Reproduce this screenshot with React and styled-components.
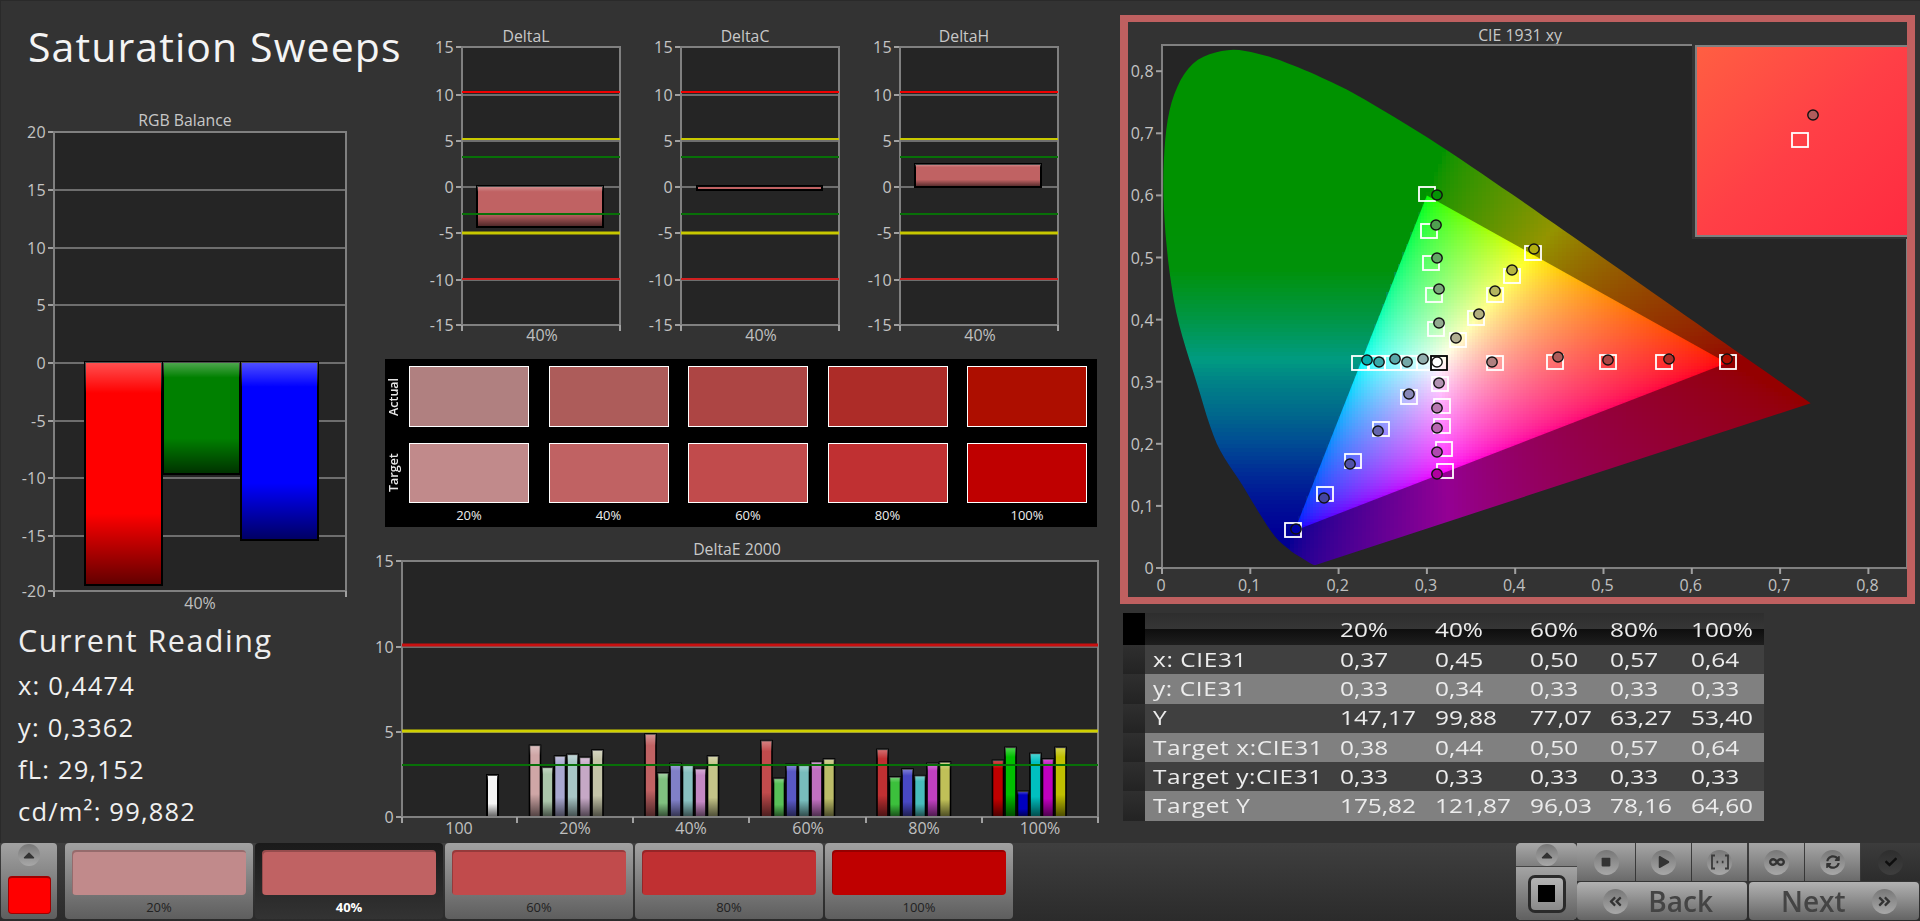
import React from "react";
import styled, { createGlobalStyle } from "styled-components";
import {
  FaStop,
  FaPlay,
  FaCheck,
  FaSyncAlt,
  FaInfinity,
  FaAngleDoubleLeft,
  FaAngleDoubleRight,
  FaCaretUp,
} from "react-icons/fa";

const FONT = `"Open Sans", "Noto Sans", "Liberation Sans", sans-serif`;
const LEVELS = ["20%", "40%", "60%", "80%", "100%"];
const ACTUAL = ["#b08080", "#ad5c5a", "#ad4544", "#ad2c28", "#ad0e00"];
const TARGET = ["#c18a8b", "#c06263", "#c14b4c", "#c03032", "#bf0000"];

const GlobalStyle = createGlobalStyle`
  html, body { margin: 0; padding: 0; background: #333; }
  body { font-family: ${FONT}; overflow: hidden; }
`;

// spectral locus, CIE 1931, nudged a bit to follow the picture
const LOCUS_RAW = [
  [0.1741, 0.005], [0.1726, 0.0048], [0.1689, 0.0069], [0.1566, 0.0177], [0.144, 0.0297],
  [0.1241, 0.0578], [0.0913, 0.1327], [0.062, 0.2007], [0.04, 0.295], [0.016, 0.4127],
  [0.004, 0.5384], [0.002, 0.6548], [0.011, 0.7502], [0.035, 0.812], [0.0743, 0.8338],
  [0.1142, 0.8262], [0.1547, 0.8059], [0.1929, 0.7816], [0.2296, 0.7543], [0.3016, 0.6923],
  [0.3731, 0.6245], [0.4441, 0.5547], [0.5125, 0.4866], [0.5752, 0.4242], [0.627, 0.3725],
  [0.6915, 0.3083], [0.7347, 0.2653],
];
const GAMUT = [[0.64, 0.33], [0.3, 0.6], [0.15, 0.06]];

const smooth = (pts) => {
  const out = [];
  for (let i = 0; i < pts.length - 1; i++) {
    const p0 = pts[Math.max(i - 1, 0)];
    const p1 = pts[i];
    const p2 = pts[i + 1];
    const p3 = pts[Math.min(i + 2, pts.length - 1)];
    for (let s = 0; s < 6; s++) {
      const t = s / 6;
      out.push([0, 1].map((k) =>
        0.5 * (2 * p1[k] + (p2[k] - p0[k]) * t +
          (2 * p0[k] - 5 * p1[k] + 4 * p2[k] - p3[k]) * t * t +
          (3 * p1[k] - p0[k] - 3 * p2[k] + p3[k]) * t * t * t)
      ));
    }
  }
  out.push(pts[pts.length - 1]);
  return out;
};
const LOCUS = smooth(LOCUS_RAW);

const px = (x) => 1162 + x * 883;
const py = (y) => 568 - y * 621;
const toPoints = (list) => list.map(([x, y]) => `${px(x).toFixed(1)},${py(y).toFixed(1)}`).join(" ");

const LEFT_RAMP = [
  [0.6, 146, 0], [0.48, 146, 10], [0.4, 150, 70], [0.335, 155, 130], [0.3, 130, 135],
  [0.25, 105, 140], [0.2, 75, 148], [0.15, 42, 150], [0.1, 15, 150], [0.06, 0, 150], [0, 0, 140],
];

const leftColor = (y) => {
  for (let i = 0; i < LEFT_RAMP.length - 1; i++) {
    const [y1, g1, b1] = LEFT_RAMP[i];
    const [y2, g2, b2] = LEFT_RAMP[i + 1];
    if (y <= y1 && y >= y2) {
      const t = (y1 - y) / (y1 - y2);
      return `rgb(0,${Math.round(g1 + (g2 - g1) * t)},${Math.round(b1 + (b2 - b1) * t)})`;
    }
  }
  return "rgb(0,146,0)";
};

const cieColor = (x, y, scale) => {
  const X = x / y;
  const Z = (1 - x - y) / y;
  const lin = [
    3.2406 * X - 1.5372 - 0.4986 * Z,
    -0.9689 * X + 1.8758 + 0.0415 * Z,
    0.0557 * X - 0.204 + 1.057 * Z,
  ].map((v) => Math.max(v, 0));
  const top = Math.max(...lin) || 1;
  const [r, g, b] = lin.map((v) => Math.round(255 * scale * Math.pow(v / top, 1 / 1.7)));
  return `rgb(${r},${g},${b})`;
};

const outerColor = (x, y) => {
  const edge = 0.15 + (y - 0.06) * (0.15 / 0.54);
  if (x < edge) return leftColor(y);
  return cieColor(x, y, 0.58);
};

const buildCells = (x0, x1, y0, y1, step, colorAt) => {
  const cells = [];
  for (let top = y0; top < y1; top += step) {
    for (let left = x0; left < x1; left += step) {
      const x = (left + step / 2 - 1162) / 883;
      const y = (568 - top - step / 2) / 621;
      if (y <= 0.001 || x <= 0) continue;
      cells.push({ x: left, y: top, fill: colorAt(x, y) });
    }
  }
  return cells;
};

const OUTER_CELLS = buildCells(1162, 1812, 48, 568, 4, outerColor);
const INNER_CELLS = buildCells(1292, 1728, 192, 532, 3, (x, y) => cieColor(x, y, 1));

const SQUARES = [
  [1427, 194], [1429, 231], [1431, 263], [1434, 295], [1436, 329],
  [1533, 253], [1512, 276], [1495, 295], [1476, 318], [1458, 340],
  [1495, 363], [1555, 362], [1608, 362], [1664, 362], [1728, 362],
  [1360, 363], [1377, 363], [1393, 363], [1409, 363], [1425, 363],
  [1440, 384], [1442, 406], [1442, 426], [1444, 449], [1445, 471],
  [1409, 397], [1381, 429], [1353, 461], [1325, 494], [1293, 530],
  [1800, 140],
];

const DOTS = [
  [1437, 195, "#049304"], [1436, 225, "#4f9f4f"], [1437, 258, "#62a763"], [1439, 289, "#7aa87a"], [1439, 323, "#92aa90"],
  [1534, 249, "#b0ae10"], [1512, 270, "#b6b63f"], [1495, 291, "#b5b55f"], [1479, 314, "#b2b07f"], [1456, 338, "#b0ae92"],
  [1492, 362, "#b08080"], [1558, 357, "#ad5c5a"], [1608, 360, "#ad4544"], [1669, 359, "#ad2c28"], [1727, 359, "#ad0e00"],
  [1367, 360, "#08adad"], [1379, 362, "#38a8a8"], [1395, 359, "#5aa8a8"], [1407, 362, "#74a8a8"], [1423, 359, "#92aeae"],
  [1437, 362, "#ffffff"],
  [1439, 383, "#b292b2"], [1437, 408, "#b878b0"], [1437, 428, "#b866b0"], [1437, 452, "#b048b0"], [1437, 474, "#b000a0"],
  [1409, 394, "#8888b8"], [1378, 431, "#6565ad"], [1350, 464, "#5252a8"], [1324, 498, "#4444a0"], [1296, 529, "#0000a8"],
  [1813, 115, "#b05c5c"],
];

const BAR_GROUPS = [
  { x: 529.5, tops: [646, 712, 678, 673, 682, 660], colors: ["#cfa6a6", "#aac6aa", "#a8a8d0", "#a8c6c6", "#c6a8c6", "#c4c4a8"] },
  { x: 645, tops: [612, 729, 700, 706, 716, 678], colors: ["#c06263", "#80c080", "#8080c8", "#88c0c0", "#c488c4", "#c4c488"] },
  { x: 761, tops: [632, 745, 703, 706, 695, 687], colors: ["#c14b4c", "#58c058", "#5858c4", "#78bcbc", "#c070c0", "#bcbc68"] },
  { x: 877, tops: [658, 741, 717, 737, 700, 696], colors: ["#c03032", "#3cc03c", "#4848c4", "#48bcbc", "#c040c0", "#c0c058"] },
  { x: 992.5, tops: [691, 652, 784, 670, 687, 652], colors: ["#bf0000", "#00bf00", "#0000bf", "#00bfbf", "#bf00bf", "#bfbf00"] },
];

const TABLE = [
  ["x: CIE31", "0,37", "0,45", "0,50", "0,57", "0,64"],
  ["y: CIE31", "0,33", "0,34", "0,33", "0,33", "0,33"],
  ["Y", "147,17", "99,88", "77,07", "63,27", "53,40"],
  ["Target x:CIE31", "0,38", "0,44", "0,50", "0,57", "0,64"],
  ["Target y:CIE31", "0,33", "0,33", "0,33", "0,33", "0,33"],
  ["Target Y", "175,82", "121,87", "96,03", "78,16", "64,60"],
];

const DeltaChart = ({ left, title, bar }) => {
  const right = left + 158;
  const rows = [[15, 47], [10, 95], [5, 141], [0, 187], [-5, 233], [-10, 280], [-15, 325]];
  return (
    <ChartSvg width={219} height={324} viewBox={`${left - 50} 21 219 324`}>
      <ChartTitle x={left + 64} y={36}>{title}</ChartTitle>
      <rect x={left} y={47} width={158} height={278} fill="#252525" />
      {rows.map(([label, y]) => (
        <g key={label}>
          <GridLine x1={left} x2={right} y1={y} y2={y} />
          <TickLine x1={left - 6} x2={left} y1={y} y2={y} />
          <TickLabel x={left - 8} y={y}>{label}</TickLabel>
        </g>
      ))}
      <PlotFrame x={left} y={47} width={158} height={278} />
      <Limit x1={left} x2={right} y1={92} y2={92} stroke="#f00000" />
      <Limit x1={left} x2={right} y1={139} y2={139} stroke="#c8c800" />
      <Limit x1={left} x2={right} y1={157} y2={157} stroke="#087008" />
      <BarRect x={left + bar.dx} y={bar.y} width={bar.w} height={bar.h} fill="#c06263" />
      <BarSheen x={left + bar.dx} y={bar.y} width={bar.w} height={bar.h} />
      <Limit x1={left} x2={right} y1={214} y2={214} stroke="#087008" />
      <Limit x1={left} x2={right} y1={233} y2={233} stroke="#c8c800" $thick />
      <Limit x1={left} x2={right} y1={279} y2={279} stroke="#d02020" />
      <TickLine x1={left} x2={left} y1={325} y2={331} />
      <TickLine x1={right} x2={right} y1={325} y2={331} />
      <AxisLabel x={left + 80} y={335}>40%</AxisLabel>
    </ChartSvg>
  );
};

const RgbChart = () => {
  const rows = [[20, 132], [15, 190], [10, 248], [5, 305], [0, 363], [-5, 421], [-10, 478], [-15, 536], [-20, 591]];
  const bars = [
    { x: 85, w: 77, bottom: 585, fill: "#ff0000" },
    { x: 163, w: 77, bottom: 474, fill: "#008000" },
    { x: 241, w: 77, bottom: 540, fill: "#0000ff" },
  ];
  return (
    <ChartSvg width={376} height={515} viewBox="0 100 376 515">
      <defs>
        <linearGradient id="bar-sheen" x1="0" y1="0" x2="0" y2="1">
          <stop offset="0" stopColor="#fff" stopOpacity="0.32" />
          <stop offset="0.14" stopColor="#fff" stopOpacity="0" />
          <stop offset="0.68" stopColor="#000" stopOpacity="0" />
          <stop offset="1" stopColor="#000" stopOpacity="0.62" />
        </linearGradient>
      </defs>
      <ChartTitle x={185} y={120}>RGB Balance</ChartTitle>
      <rect x={54} y={132} width={292} height={459} fill="#252525" />
      {rows.map(([label, y]) => (
        <g key={label}>
          <GridLine x1={54} x2={346} y1={y} y2={y} />
          <TickLine x1={48} x2={54} y1={y} y2={y} />
          <TickLabel x={46} y={y}>{label}</TickLabel>
        </g>
      ))}
      <PlotFrame x={54} y={132} width={292} height={459} />
      {bars.map((b) => (
        <g key={b.x}>
          <BarRect x={b.x} y={362} width={b.w} height={b.bottom - 362} fill={b.fill} />
          <BarSheen x={b.x} y={362} width={b.w} height={b.bottom - 362} />
        </g>
      ))}
      <TickLine x1={54} x2={54} y1={591} y2={597} />
      <TickLine x1={346} x2={346} y1={591} y2={597} />
      <AxisLabel x={200} y={603}>40%</AxisLabel>
    </ChartSvg>
  );
};

const DeltaEChart = () => {
  const ticks = [402, 517, 633, 749, 866, 982, 1098];
  const labels = [["100", 459], ["20%", 575], ["40%", 691], ["60%", 808], ["80%", 924], ["100%", 1040]];
  const rows = [[15, 561], [10, 647], [5, 732], [0, 817]];
  return (
    <ChartSvg width={740} height={308} viewBox="376 535 740 308">
      <ChartTitle x={737} y={549}>DeltaE 2000</ChartTitle>
      <rect x={402} y={561} width={696} height={256} fill="#252525" />
      {rows.map(([label, y]) => (
        <g key={label}>
          <GridLine x1={402} x2={1098} y1={y} y2={y} />
          <TickLine x1={396} x2={402} y1={y} y2={y} />
          <TickLabel x={394} y={y}>{label}</TickLabel>
        </g>
      ))}
      <BarRect x={487} y={775} width={11} height={42} fill="#f4f4f4" />
      <BarSheen x={487} y={775} width={11} height={42} />
      {BAR_GROUPS.map((group) =>
        group.tops.map((top, i) => {
          const y = 530 + top / 3;
          const x = group.x + i * 12.5;
          return (
            <g key={x}>
              <BarRect x={x} y={y} width={11} height={817 - y} fill={group.colors[i]} $thin />
              <BarSheen x={x} y={y} width={11} height={817 - y} />
            </g>
          );
        })
      )}
      <PlotFrame x={402} y={561} width={696} height={256} />
      <Limit x1={402} x2={1098} y1={645} y2={645} stroke="#c81010" $thick />
      <Limit x1={402} x2={1098} y1={731} y2={731} stroke="#d0d000" $thick />
      <Limit x1={402} x2={1098} y1={765} y2={765} stroke="#087008" />
      {ticks.map((x) => (
        <TickLine key={x} x1={x} x2={x} y1={817} y2={823} />
      ))}
      {labels.map(([text, x]) => (
        <AxisLabel key={text} x={x} y={828}>{text}</AxisLabel>
      ))}
    </ChartSvg>
  );
};

const CieChart = () => {
  const ticks = [0, 0.1, 0.2, 0.3, 0.4, 0.5, 0.6, 0.7, 0.8];
  const label = (v) => (v === 0 ? "0" : v.toFixed(1).replace(".", ","));
  return (
    <ChartSvg width={779} height={575} viewBox="1128 22 779 575">
      <defs>
        <clipPath id="locus-clip">
          <polygon points={toPoints(LOCUS)} />
        </clipPath>
        <clipPath id="gamut-clip">
          <polygon points={toPoints(GAMUT)} />
        </clipPath>
        <linearGradient id="inset-a" x1="0" y1="0" x2="1" y2="1">
          <stop offset="0" stopColor="#ff5f42" />
          <stop offset="0.5" stopColor="#ff3f46" />
          <stop offset="1" stopColor="#ff2a40" />
        </linearGradient>
      </defs>
      <ChartTitle x={1520} y={35}>CIE 1931 xy</ChartTitle>
      <PlotFill x={1162} y={45} width={745} height={523} />
      <g clipPath="url(#locus-clip)" shapeRendering="crispEdges">
        {OUTER_CELLS.map((c) => (
          <rect key={`${c.x}-${c.y}`} x={c.x} y={c.y} width={4} height={4} fill={c.fill} />
        ))}
      </g>
      <g clipPath="url(#gamut-clip)" shapeRendering="crispEdges">
        {INNER_CELLS.map((c) => (
          <rect key={`${c.x}-${c.y}`} x={c.x} y={c.y} width={3} height={3} fill={c.fill} />
        ))}
      </g>
      <PlotFrame x={1162} y={45} width={745} height={523} />
      {ticks.map((v) => (
        <g key={v}>
          <TickLine x1={1156} x2={1162} y1={py(v)} y2={py(v)} />
          <TickLabel x={1154} y={py(v)}>{label(v)}</TickLabel>
          <TickLine x1={px(v)} x2={px(v)} y1={568} y2={574} />
          <AxisLabel x={px(v) - 1} y={585}>{label(v)}</AxisLabel>
        </g>
      ))}
      <rect x={1692} y={42} width={218} height={197} fill="#333" />
      <InsetRect x={1696} y={46} width={212} height={190} fill="url(#inset-a)" />
      {SQUARES.map(([x, y]) => (
        <Target key={`${x}-${y}`} x={x - 8} y={y - 7} width={16} height={14} />
      ))}
      <Target x={1431} y={356} width={16} height={14} stroke="#000" />
      {DOTS.map(([x, y, fill]) => (
        <Reading key={`${x}-${y}`} cx={x} cy={y} rx={5.2} ry={5} fill={fill} />
      ))}
    </ChartSvg>
  );
};

const BracketIcon = () => (
  <svg width="20" height="16" viewBox="0 0 20 16" fill="none" stroke="#3a3a3a" strokeWidth="1.8">
    <path d="M5 1.5H2V14.5H5M15 1.5H18V14.5H15" />
    <path d="M6.5 8H8.2M11.8 8H13.5" strokeWidth="2.4" />
  </svg>
);

export default function App() {
  return (
    <Page>
      <GlobalStyle />
      <Content>
        <LeftColumn>
          <Title>Saturation Sweeps</Title>
          <RgbChart />
          <Readings>
            <ReadingTitle>Current Reading</ReadingTitle>
            <ReadingRow>x: 0,4474</ReadingRow>
            <ReadingRow>y: 0,3362</ReadingRow>
            <ReadingRow>fL: 29,152</ReadingRow>
            <ReadingRow>cd/m²: 99,882</ReadingRow>
          </Readings>
        </LeftColumn>

        <MiddleColumn>
          <DeltaRow>
            <DeltaChart left={462} title="DeltaL" bar={{ dx: 15, y: 186, w: 126, h: 41 }} />
            <DeltaChart left={681} title="DeltaC" bar={{ dx: 16, y: 186, w: 125, h: 4 }} />
            <DeltaChart left={900} title="DeltaH" bar={{ dx: 15, y: 164, w: 126, h: 23 }} />
          </DeltaRow>
          <SwatchPanel>
            <RowLabel>Actual</RowLabel>
            {ACTUAL.map((c) => (
              <Swatch key={c} $color={c} />
            ))}
            <RowLabel>Target</RowLabel>
            {TARGET.map((c) => (
              <Swatch key={c} $color={c} />
            ))}
            <span />
            {LEVELS.map((l) => (
              <SwatchCaption key={l}>{l}</SwatchCaption>
            ))}
          </SwatchPanel>
          <DeltaEChart />
        </MiddleColumn>

        <RightColumn>
          <CieFrame>
            <CieChart />
          </CieFrame>
          <DataTable>
            <thead>
              <tr>
                <CornerCell />
                <HeadCell />
                {LEVELS.map((l) => (
                  <HeadCell key={l}><CellText>{l}</CellText></HeadCell>
                ))}
              </tr>
            </thead>
            <tbody>
              {TABLE.map((row, i) => (
                <DataRow key={row[0]} $alt={i % 2 === 1}>
                  <GutterCell />
                  {row.map((cell, j) => (
                    <DataCell key={j} $first={j === 0}>
                      <CellText $first={j === 0}>{cell}</CellText>
                    </DataCell>
                  ))}
                </DataRow>
              ))}
            </tbody>
          </DataTable>
        </RightColumn>
      </Content>

      <BottomBar>
        <ColorButton>
          <RoundButton $small>
            <FaCaretUp size={18} />
          </RoundButton>
          <ColorChip />
        </ColorButton>
        <Tabs>
          {LEVELS.map((l, i) => (
            <Tab key={l} $active={i === 1}>
              <TabSwatch $color={TARGET[i]} />
              <TabLabel $active={i === 1}>{l}</TabLabel>
            </Tab>
          ))}
        </Tabs>
        <Controls>
          <StopPanel>
            <StopTop>
              <RoundButton $small>
                <FaCaretUp size={18} />
              </RoundButton>
            </StopTop>
            <StopBottom>
              <StopFrame>
                <StopMark />
              </StopFrame>
            </StopBottom>
          </StopPanel>
          <ControlGrid>
            <ToolRow>
              <ToolCell><RoundButton><FaStop size={10} /></RoundButton></ToolCell>
              <ToolCell><RoundButton><FaPlay size={12} /></RoundButton></ToolCell>
              <ToolCell><RoundButton><BracketIcon /></RoundButton></ToolCell>
              <ToolCell $gap><RoundButton><FaInfinity size={16} /></RoundButton></ToolCell>
              <ToolCell><RoundButton><FaSyncAlt size={14} /></RoundButton></ToolCell>
              <ToolCell $dark $grow><RoundButton $dark><FaCheck size={12} /></RoundButton></ToolCell>
            </ToolRow>
            <NavRow>
              <NavButton>
                <RoundButton><FaAngleDoubleLeft size={15} /></RoundButton>
                <NavText>Back</NavText>
              </NavButton>
              <NavButton $reverse>
                <RoundButton><FaAngleDoubleRight size={15} /></RoundButton>
                <NavText>Next</NavText>
              </NavButton>
            </NavRow>
          </ControlGrid>
        </Controls>
      </BottomBar>
    </Page>
  );
}

const Page = styled.div`
  width: 1920px;
  height: 921px;
  display: flex;
  flex-direction: column;
  background: #333;
  color: #eee;
  font-family: ${FONT};
  box-shadow: inset 1px 1px 0 #2a2a2a;
`;

const Content = styled.div`
  display: flex;
  height: 843px;
`;

const LeftColumn = styled.div`
  width: 376px;
  display: flex;
  flex-direction: column;
`;

const Title = styled.h1`
  height: 100px;
  margin: 0;
  padding: 18px 0 0 28px;
  box-sizing: border-box;
  font-size: 41px;
  font-weight: 400;
  line-height: 56px;
  letter-spacing: 1.1px;
  white-space: nowrap;
  color: #f4f4f4;
`;

const ChartSvg = styled.svg`
  display: block;
  flex: none;
  font-family: ${FONT};
`;

const ChartTitle = styled.text`
  font-size: 15.8px;
  fill: #c8c8c8;
  text-anchor: middle;
  dominant-baseline: central;
`;

const TickLabel = styled.text`
  font-size: 16px;
  fill: #c4c4c4;
  text-anchor: end;
  dominant-baseline: central;
  letter-spacing: 0.3px;
`;

const AxisLabel = styled.text`
  font-size: 16px;
  fill: #c0c0c0;
  text-anchor: middle;
  dominant-baseline: central;
`;

const GridLine = styled.line`
  stroke: #6e6e6e;
  stroke-width: 2;
`;

const TickLine = styled.line`
  stroke: #a0a0a0;
  stroke-width: 2;
`;

const PlotFrame = styled.rect`
  fill: none;
  stroke: #808080;
  stroke-width: 2;
`;

const PlotFill = styled.rect`
  fill: #252525;
`;

const Limit = styled.line`
  stroke-width: ${(p) => (p.$thick ? 3 : 2)};
`;

const BarRect = styled.rect`
  stroke: #000;
  stroke-width: ${(p) => (p.$thin ? 1.6 : 2)};
`;

const BarSheen = styled.rect.attrs({ fill: "url(#bar-sheen)" })``;

const InsetRect = styled.rect`
  stroke: #808080;
  stroke-width: 2;
`;

const Target = styled.rect`
  fill: none;
  stroke: ${(p) => p.stroke || "#fff"};
  stroke-width: 1.8;
`;

const Reading = styled.ellipse`
  stroke: #111;
  stroke-width: 1.4;
`;

const Readings = styled.div`
  padding: 5px 0 0 18px;
  display: flex;
  flex-direction: column;
`;

const ReadingTitle = styled.div`
  font-size: 30.5px;
  line-height: 40px;
  margin-bottom: 4px;
  letter-spacing: 1.5px;
  color: #eee;
`;

const ReadingRow = styled.div`
  font-size: 25.5px;
  line-height: 42px;
  letter-spacing: 1.2px;
  color: #f0f0f0;
`;

const MiddleColumn = styled.div`
  width: 744px;
  display: flex;
  flex-direction: column;
`;

const DeltaRow = styled.div`
  display: flex;
  height: 359px;
  padding: 21px 0 0 36px;
  box-sizing: border-box;
`;

const SwatchPanel = styled.div`
  width: 712px;
  height: 168px;
  margin: 0 0 8px 9px;
  padding-top: 7px;
  box-sizing: border-box;
  background: #000;
  display: grid;
  grid-template-columns: 24px repeat(5, 139.5px);
  grid-template-rows: 61px 60px 24px;
  row-gap: 16px;
`;

const RowLabel = styled.div`
  width: 20px;
  writing-mode: vertical-rl;
  transform: rotate(180deg);
  text-align: center;
  font-size: 12.5px;
  font-weight: 600;
  color: #e8e8e8;
`;

const Swatch = styled.div`
  width: 120px;
  box-sizing: border-box;
  background: ${(p) => p.$color};
  border: 1.5px solid #fff;
`;

const SwatchCaption = styled.div`
  width: 120px;
  font-size: 13px;
  color: #eee;
  text-align: center;
  margin-top: -16px;
  line-height: 24px;
`;

const RightColumn = styled.div`
  flex: 1;
  display: flex;
  flex-direction: column;
`;

const CieFrame = styled.div`
  width: 795px;
  height: 589px;
  margin-top: 15px;
  box-sizing: border-box;
  border: solid #bf6060;
  border-width: 7px 8px;
  background: #333;
`;

const DataTable = styled.table`
  margin: 9px 0 0 3px;
  width: 641px;
  table-layout: fixed;
  border-collapse: collapse;
  font-size: 19.5px;
  color: #ececec;
`;

const CellText = styled.span`
  display: inline-block;
  letter-spacing: ${(p) => (p.$first ? "0.5px" : "0")};
  transform: scaleX(1.25);
  transform-origin: left center;
`;

const CornerCell = styled.th`
  width: 22px;
  height: 32px;
  padding: 0;
  background: #000;
`;

const HeadCell = styled.th`
  padding: 0;
  font-weight: 400;
  text-align: left;
  white-space: nowrap;
  background: linear-gradient(#2e2e2e, #363636 50%, #0e0e0e 50%, #1e1e1e);

  &:nth-child(2) { width: 195px; }
  &:nth-child(3) { width: 95px; }
  &:nth-child(4) { width: 95px; }
  &:nth-child(5) { width: 80px; }
  &:nth-child(6) { width: 81px; }
  &:nth-child(7) { width: 73px; }
`;

const DataRow = styled.tr`
  height: 29.3px;
  background: ${(p) => (p.$alt ? "#808080" : "#404040")};
`;

const GutterCell = styled.td`
  padding: 0;
  background: linear-gradient(#2f2f2f, #232323);
`;

const DataCell = styled.td`
  padding: 0 0 0 ${(p) => (p.$first ? "8px" : "0")};
  white-space: nowrap;
  line-height: 1;
`;

const BottomBar = styled.div`
  height: 78px;
  display: flex;
  padding-left: 1px;
  box-sizing: border-box;
  background: linear-gradient(#3f3f3f, #2b2b2b);
`;

const ColorButton = styled.div`
  width: 56px;
  height: 76px;
  margin-right: 8px;
  border-radius: 4px;
  background: linear-gradient(#a2a2a2, #5e5e5e);
  display: flex;
  flex-direction: column;
  align-items: center;
  justify-content: space-between;
  padding: 0 0 5px;
  box-sizing: border-box;
`;

const RoundButton = styled.span`
  width: ${(p) => (p.$small ? "22px" : "25px")};
  height: ${(p) => (p.$small ? "22px" : "25px")};
  margin-top: ${(p) => (p.$small ? "1px" : "0")};
  flex: none;
  display: flex;
  align-items: center;
  justify-content: center;
  border-radius: 50%;
  color: ${(p) => (p.$dark ? "#0e0e0e" : "#333")};
  background: ${(p) =>
    p.$dark
      ? "linear-gradient(#2e2e2e, #3e3e3e)"
      : "linear-gradient(#777, #a8a8a8)"};
`;

const ColorChip = styled.div`
  width: 43px;
  height: 38px;
  box-sizing: border-box;
  border-radius: 4px;
  background: #ff0000;
  border: 1px solid #a00000;
  border-top-width: 2px;
`;

const Tabs = styled.div`
  display: flex;
  gap: 2px;
`;

const Tab = styled.div`
  width: 188px;
  height: 76px;
  box-sizing: border-box;
  padding: 7px 7px 0;
  border-radius: 4px;
  background: ${(p) =>
    p.$active ? "linear-gradient(#1a1a1a, #333)" : "linear-gradient(#a2a2a2, #5e5e5e)"};
  display: flex;
  flex-direction: column;
`;

const TabSwatch = styled.div`
  height: 45px;
  border-radius: 4px;
  background: ${(p) => p.$color};
  box-shadow: inset 1px 2px 0 rgba(0, 0, 0, 0.22);
`;

const TabLabel = styled.div`
  margin-top: 4px;
  text-align: center;
  font-size: 13px;
  line-height: 16px;
  font-weight: ${(p) => (p.$active ? 700 : 400)};
  color: ${(p) => (p.$active ? "#fff" : "#222")};
`;

const Controls = styled.div`
  margin-left: auto;
  display: flex;
`;

const StopPanel = styled.div`
  width: 61px;
  height: 77px;
  border-radius: 5px;
  overflow: hidden;
  display: flex;
  flex-direction: column;
  background: #888;
`;

const StopTop = styled.div`
  height: 23px;
  flex: none;
  display: flex;
  justify-content: center;
  background: linear-gradient(#a8a8a8, #7e7e7e);
  border-bottom: 1px solid #444;
`;

const StopBottom = styled.div`
  flex: 1;
  display: flex;
  align-items: center;
  justify-content: center;
  background: linear-gradient(#a4a4a4, #606060);
`;

const StopFrame = styled.div`
  width: 38px;
  height: 38px;
  box-sizing: border-box;
  border: 3px solid #2a2a2a;
  border-radius: 7px;
  display: flex;
  align-items: center;
  justify-content: center;
  background: linear-gradient(#b4b4b4, #8a8a8a);
`;

const StopMark = styled.div`
  width: 17px;
  height: 17px;
  background: #000;
`;

const ControlGrid = styled.div`
  width: 343px;
  display: flex;
  flex-direction: column;
  gap: 1px;
`;

const ToolRow = styled.div`
  height: 38px;
  display: flex;
  gap: 1px;
`;

const ToolCell = styled.div`
  width: 55px;
  flex: ${(p) => (p.$grow ? 1 : "none")};
  margin-left: ${(p) => (p.$gap ? "1px" : "0")};
  display: flex;
  align-items: center;
  justify-content: center;
  background: ${(p) =>
    p.$dark ? "linear-gradient(#3c3c3c, #2c2c2c)" : "linear-gradient(#a6a6a6, #6a6a6a)"};

  &:first-child { width: 58px; }
`;

const NavRow = styled.div`
  height: 38px;
  display: flex;
  gap: 2px;
`;

const NavButton = styled.div`
  width: 170px;
  box-sizing: border-box;
  display: flex;
  flex-direction: ${(p) => (p.$reverse ? "row-reverse" : "row")};
  align-items: center;
  justify-content: space-between;
  padding: 0 ${(p) => (p.$reverse ? "22px" : "34px")} 0 ${(p) => (p.$reverse ? "32px" : "26px")};
  border-radius: 4px;
  background: linear-gradient(#b2b2b2, #646464);
`;

const NavText = styled.span`
  font-size: 28px;
  font-weight: 600;
  line-height: 36px;
  color: #444;
  filter: blur(0.4px);
`;
